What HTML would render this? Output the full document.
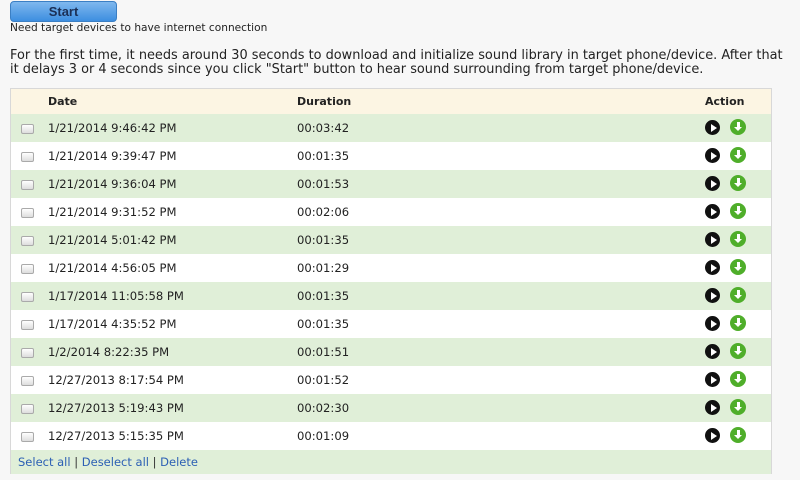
<!DOCTYPE html>
<html><head><meta charset="utf-8"><style>
body{margin:0;width:800px;height:480px;background:#f7f7f7;font-family:"DejaVu Sans","Liberation Sans",sans-serif;overflow:hidden;position:relative;color:#222}
.btn{position:absolute;left:10px;top:1px;width:107px;height:21px;border-radius:4px;background:linear-gradient(#7fb8ee,#3d8ee0);border:1px solid #3b7fc4;box-sizing:border-box;text-align:center;font:bold 13px "Liberation Sans",sans-serif;line-height:20px;color:#1b2f55}
.need{position:absolute;left:10px;top:22px;font-size:10.6px;color:#222}
.p{position:absolute;left:10px;top:49px;font-size:12.9px;line-height:14px;white-space:nowrap;color:#222}
.tbl{position:absolute;left:10px;top:88px;width:762px;height:386px;border:1px solid #d8d8d8;box-sizing:border-box;background:#fff}
.row{position:absolute;left:0;width:760px;height:28px;font-size:11.6px}
.row span{position:absolute;top:7px}
.hd{top:0;height:25px;background:#fcf5e3;font-weight:bold;font-size:11px}
.hd span{top:6px}
.g{background:#e0efd8}
.cb{position:absolute;left:10px;top:10px;width:11px;height:8px;border:1px solid #aaa;border-radius:2px;background:linear-gradient(#fff,#ddd)}
.pl{position:absolute;left:694px;top:6px;width:15px;height:15px;border-radius:50%;background:#111}
.pl:after{content:"";position:absolute;left:6px;top:3.5px;border-left:6px solid #fff;border-top:4px solid transparent;border-bottom:4px solid transparent}
.dl{position:absolute;left:719px;top:5px;width:16px;height:16px;border-radius:50%;background:#4fae2a}
.dl:before{content:"";position:absolute;left:6.5px;top:3px;width:3px;height:5px;background:#fff}
.dl:after{content:"";position:absolute;left:4px;top:8px;border-top:4.5px solid #fff;border-left:4px solid transparent;border-right:4px solid transparent}
.ft{position:absolute;left:0;top:361px;width:760px;height:24px;background:#e0efd8;font-size:11.5px;color:#2b5fb4}
.ft span{position:absolute;left:7px;top:5px}
</style></head><body>
<div class="btn">Start</div>
<div class="need">Need target devices to have internet connection</div>
<div class="p">For the first time, it needs around 30 seconds to download and initialize sound library in target phone/device. After that<br>it delays 3 or 4 seconds since you click "Start" button to hear sound surrounding from target phone/device.</div>
<div class="tbl">
<div class="row hd"><span style="left:37px">Date</span><span style="left:286px">Duration</span><span style="left:694px">Action</span></div>
<div class="row g" style="top:25px"><div class="cb"></div><span style="left:37px">1/21/2014 9:46:42 PM</span><span style="left:286px">00:03:42</span><div class="pl"></div><div class="dl"></div></div>
<div class="row" style="top:53px"><div class="cb"></div><span style="left:37px">1/21/2014 9:39:47 PM</span><span style="left:286px">00:01:35</span><div class="pl"></div><div class="dl"></div></div>
<div class="row g" style="top:81px"><div class="cb"></div><span style="left:37px">1/21/2014 9:36:04 PM</span><span style="left:286px">00:01:53</span><div class="pl"></div><div class="dl"></div></div>
<div class="row" style="top:109px"><div class="cb"></div><span style="left:37px">1/21/2014 9:31:52 PM</span><span style="left:286px">00:02:06</span><div class="pl"></div><div class="dl"></div></div>
<div class="row g" style="top:137px"><div class="cb"></div><span style="left:37px">1/21/2014 5:01:42 PM</span><span style="left:286px">00:01:35</span><div class="pl"></div><div class="dl"></div></div>
<div class="row" style="top:165px"><div class="cb"></div><span style="left:37px">1/21/2014 4:56:05 PM</span><span style="left:286px">00:01:29</span><div class="pl"></div><div class="dl"></div></div>
<div class="row g" style="top:193px"><div class="cb"></div><span style="left:37px">1/17/2014 11:05:58 PM</span><span style="left:286px">00:01:35</span><div class="pl"></div><div class="dl"></div></div>
<div class="row" style="top:221px"><div class="cb"></div><span style="left:37px">1/17/2014 4:35:52 PM</span><span style="left:286px">00:01:35</span><div class="pl"></div><div class="dl"></div></div>
<div class="row g" style="top:249px"><div class="cb"></div><span style="left:37px">1/2/2014 8:22:35 PM</span><span style="left:286px">00:01:51</span><div class="pl"></div><div class="dl"></div></div>
<div class="row" style="top:277px"><div class="cb"></div><span style="left:37px">12/27/2013 8:17:54 PM</span><span style="left:286px">00:01:52</span><div class="pl"></div><div class="dl"></div></div>
<div class="row g" style="top:305px"><div class="cb"></div><span style="left:37px">12/27/2013 5:19:43 PM</span><span style="left:286px">00:02:30</span><div class="pl"></div><div class="dl"></div></div>
<div class="row" style="top:333px"><div class="cb"></div><span style="left:37px">12/27/2013 5:15:35 PM</span><span style="left:286px">00:01:09</span><div class="pl"></div><div class="dl"></div></div>
<div class="ft"><span>Select all <span style="position:static;color:#333">|</span> Deselect all <span style="position:static;color:#333">|</span> Delete</span></div>
</div>
</body></html>
